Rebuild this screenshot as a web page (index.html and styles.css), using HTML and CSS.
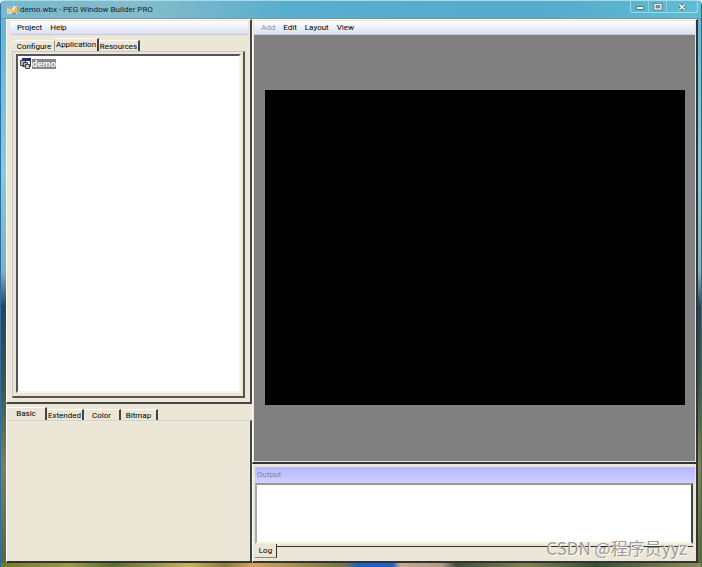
FILE: index.html
```
<!DOCTYPE html>
<html lang="en">
<head>
<meta charset="utf-8">
<title>demo.wbx - PEG Window Builder PRO</title>
<link rel="stylesheet" href="styles.css">
</head>
<body>
<div class="window">
  <header class="titlebar">
    <svg class="app-icon" viewBox="0 0 10 10" aria-hidden="true"><path d="M0 1h10v8H0z" fill="#c5dcec"/><path d="M0 1h6v2H0z" fill="#8fbbe0"/><path d="M1 3h3l2 3 3-5 1 1v5L7 9 2 7z" fill="#f0b43c"/><path d="M2 4l3 4M8 2L6 6" stroke="#fff"/><path d="M5 8h4v1H5z" fill="#5b8ecb"/></svg>
    <h1 class="title">demo.wbx - PEG Window Builder PRO</h1>
    <div class="controls">
      <button class="control" aria-label="Minimize"><svg viewBox="0 0 10 8"><rect x="1.5" y="3.5" width="7" height="3" rx=".5" fill="#fff" stroke="#55717c"/></svg></button>
      <button class="control" aria-label="Maximize"><svg viewBox="0 0 10 8"><rect x="2" y="1.5" width="6" height="4.5" fill="none" stroke="#55717c" stroke-width="3"/><rect x="2" y="1.5" width="6" height="4.5" fill="none" stroke="#fff" stroke-width="1.3"/></svg></button>
      <button class="control control-close" aria-label="Close"><svg viewBox="0 0 10 8"><path d="M2.5 1.5l5 5m0-5l-5 5" stroke="#55717c" stroke-width="3.4"/><path d="M2.5 1.5l5 5m0-5l-5 5" stroke="#fff" stroke-width="1.5"/></svg></button>
    </div>
  </header>
  <main class="workspace">
    <div class="side">
      <section class="project">
        <nav class="menubar"><button>Project</button><button>Help</button></nav>
        <div class="tabs project-tabs" role="tablist">
          <button class="tab" role="tab">Configure</button>
          <button class="tab tab-active" role="tab" aria-selected="true">Application</button>
          <button class="tab tab-dark" role="tab">Resources</button>
        </div>
        <div class="page">
          <div class="tree">
            <a class="node" href="#demo"><svg viewBox="0 0 11 11" aria-hidden="true"><path d="M2.5.5h8v8h-8z" fill="#eee" stroke="#333"/><path d="M2 0h9v3H2z" fill="#25258c"/><path d="M.5 2.5h5v5h-5z" fill="#b4b4b4" stroke="#444"/><path d="M3.5 4.5h4v4h-4z" fill="#aaa" stroke="#444"/><path d="M5.5 6.500h4v4h-4z" fill="#ccc" stroke="#444"/></svg><span>demo</span></a>
          </div>
        </div>
      </section>
      <section class="palette">
        <div class="tabs palette-tabs" role="tablist">
          <button class="tab tab-active" role="tab" aria-selected="true">Basic</button>
          <button class="tab" role="tab">Extended</button>
          <button class="tab" role="tab">Color</button>
          <button class="tab" role="tab">Bitmap</button>
        </div>
        <div class="palette-body"></div>
      </section>
    </div>
    <div class="content">
      <section class="editor">
        <nav class="menubar"><button disabled>Add</button><button>Edit</button><button>Layout</button><button>View</button></nav>
        <div class="stage"><div class="screen"></div></div>
      </section>
      <section class="output">
        <h2 class="output-title">Output</h2>
        <div class="log"></div>
        <div class="log-tabs"><button class="log-tab">Log</button><div class="log-rule"></div></div>
      </section>
    </div>
  </main>
  <div class="watermark">CSDN @程序员yyz</div>
</div>
</body>
</html>
```
FILE: styles.css
```
* {
  box-sizing: border-box;
}

body {
  margin: 0;
  font: 8px/12px Roboto, "Liberation Sans", sans-serif;
  color: #000;
}

button {
  margin: 0;
  padding: 0;
  border: 0;
  background: none;
  font: inherit;
  color: inherit;
  white-space: nowrap;
}

.window {
  position: relative;
  display: flex;
  flex-direction: column;
  height: 100vh;
  padding: 0 3px 4px 5px;
  border: 1px solid #47636b;
  border-top-color: #a9dbe8;
  border-left-color: #2b6fa8;
  border-bottom: 0;
  border-radius: 5px 5px 0 0;
  background:
    linear-gradient(90deg, #6f7a2c, #9a9a45 10%, #5b6b33 16%, #c9b25e 27%, #8a7a3a 32%, #d0a560 36%, #6f7440 49%, #1c62c4 51%, #1c62c4 56%, #c3ab8c 57%, #b09c80 63%, #3f5236 65%, #7f8050 75%, #36502e 85%, #8c8a58) bottom / 100% 4px no-repeat,
    linear-gradient(#5fb3d0 0, #86cbdc 30%, #7fb0bd 48%, #27465a 54%, #3b5848 68%, #7b8154 82%, #57673a 100%);
}

.titlebar {
  display: flex;
  align-items: center;
  height: 18px;
  margin: 0 -3px 0 -5px;
  padding-left: 6px;
  border-bottom: 1px solid #6d9aa8;
  background: linear-gradient(90deg, #79b8ca, #85bccb 20%, #5aaecd 40%, #55a9ca 75%, #5fbdd3);
}

.app-icon {
  width: 10px;
  height: 10px;
}

.title {
  margin: 0 auto 0 3px;
  font: inherit;
  color: #10242c;
}

.controls {
  display: flex;
  align-self: flex-start;
  height: 12px;
  margin-right: 3px;
  border: 1px solid #9bdbe8;
  border-top: 0;
  border-radius: 0 0 3px 3px;
}

.control {
  display: flex;
  align-items: center;
  justify-content: center;
  width: 18px;
  border-right: 1px solid #8ccfdf;
}

.control svg {
  width: 10px;
  height: 8px;
}

.control-close {
  width: 30px;
  border-right: 0;
}

.workspace {
  display: grid;
  grid-template-columns: 246fr 446fr;
  flex: 1;
  min-height: 0;
  background: #ece6d6;
}

.side,
.content {
  display: flex;
  flex-direction: column;
  min-width: 0;
  min-height: 0;
}

.project {
  display: flex;
  flex-direction: column;
  flex: 1;
  min-height: 0;
  padding: 1px 2px 4px 3px;
  border: 1px solid #fff;
  border-right: 2px solid #444;
  border-bottom: 2px solid #444;
}

.menubar {
  display: flex;
  align-items: flex-end;
  gap: 8px;
  flex: none;
  height: 14px;
  padding-left: 7px;
  border-bottom: 1px solid #c4cadb;
  background: linear-gradient(#fff, #d9e0f2);
}

.menubar button:disabled {
  color: #909090;
}

.tabs {
  display: flex;
  align-items: flex-end;
  flex: none;
}

.tab {
  height: 11px;
  border-top: 1px solid #fff;
  border-right: 1px solid #999;
}

.project-tabs {
  height: 16px;
  padding-left: 4px;
}

.project-tabs .tab {
  width: 41px;
}

.project-tabs .tab-active {
  width: 44px;
  height: 13px;
}

.project-tabs .tab-active,
.project-tabs .tab-dark,
.palette .tab {
  border-right: 2px solid #444;
}

.page {
  display: flex;
  flex: 1;
  margin: 0 3px 0 2px;
  padding: 2px 2px 3px 3px;
  border: 1px solid #c6c6c6;
  border-right: 2px solid #555;
  border-bottom: 2px solid #555;
}

.tree {
  flex: 1;
  padding: 2px;
  border: 2px solid #555;
  border-right-color: #f7f3e9;
  border-bottom-color: #f7f3e9;
  background: #fff;
}

.node {
  display: flex;
  align-items: center;
  gap: 1px;
  color: #fff;
  font: bold 9px/10px "Liberation Sans", sans-serif;
  text-decoration: none;
}

.node svg {
  width: 11px;
  height: 11px;
}

.node span {
  background: #888;
}

.palette {
  display: flex;
  flex-direction: column;
  flex: none;
  height: 159px;
  border-left: 1px solid #fff;
  border-bottom: 2px solid #333;
}

.palette-tabs {
  height: 16px;
}

.palette .tab {
  width: 37px;
}

.palette .tab-active {
  width: 40px;
  height: 13px;
}

.palette-body {
  flex: 1;
  border-top: 1px solid #d0d3d8;
  border-right: 2px solid #444;
}

.editor {
  display: flex;
  flex-direction: column;
  flex: 1;
  min-height: 0;
  padding: 1px;
  border: 1px solid #fffaf0;
  border-right: 2px solid #333;
  border-bottom: 2px solid #333;
}

.stage {
  display: flex;
  flex: 1;
  padding: 55px 10px 56px 11px;
  background: #808080;
}

.screen {
  flex: 1;
  background: #000;
}

.output {
  display: flex;
  flex-direction: column;
  flex: none;
  height: 99px;
  padding: 3px 1px 1px 2px;
  border-left: 1px solid #fff;
  border-right: 2px solid #333;
  border-bottom: 2px solid #333;
}

.output-title {
  flex: none;
  height: 16px;
  margin: 0;
  padding: 2px;
  background: linear-gradient(#b4b6ff, #d0d0ff);
  font: inherit;
  color: #84849c;
}

.log {
  flex: 1;
  margin-right: 2px;
  border: 2px solid #f5efdc;
  border-top-color: #999;
  border-left-color: #aaa;
  border-right-color: #444;
  background: #fff;
}

.log-tabs {
  display: flex;
  height: 16px;
  margin-right: 2px;
}

.log-tab {
  width: 22px;
  height: 14px;
  border-right: 1px solid #333;
  border-bottom: 1px solid #888;
}

.log-rule {
  flex: 1;
  height: 3px;
  border-bottom: 1px solid #333;
}

.watermark {
  position: absolute;
  right: 14px;
  bottom: 8px;
  font: 17px/22px "Noto Sans CJK SC", sans-serif;
  color: #9c9c98;
  text-shadow: 1px 1px #fff;
}
```
